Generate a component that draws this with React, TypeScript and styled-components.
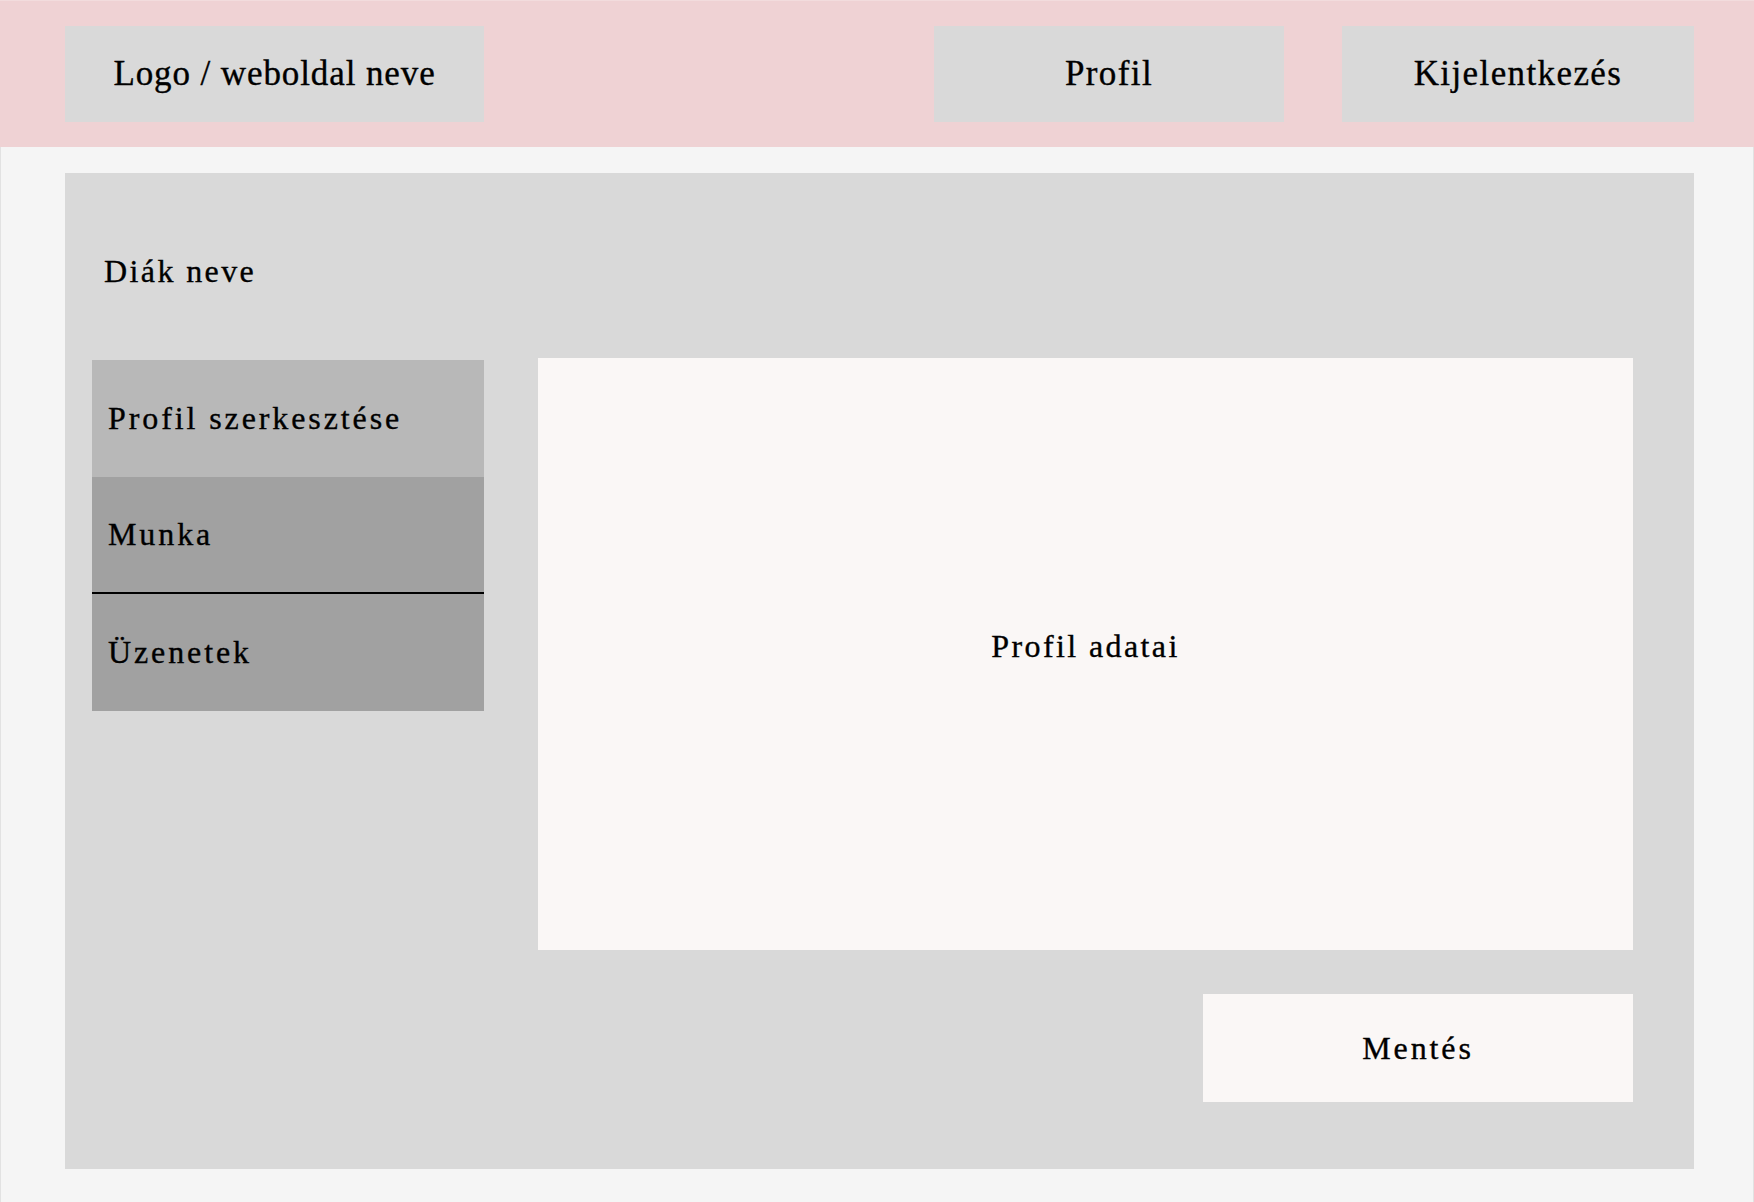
import styled, { createGlobalStyle } from 'styled-components'

const GlobalStyle = createGlobalStyle`
  html, body {
    margin: 0;
    padding: 0;
    background: #f5f5f5;
  }
  body {
    font-family: 'Liberation Serif', 'DejaVu Serif', serif;
    color: #000;
    -webkit-text-stroke: 0.35px #000;
  }
`

const Header = styled.header`
  height: 147px;
  box-sizing: border-box;
  background: #efd2d4;
  display: flex;
  align-items: center;
  padding: 0 60px 0 65px;
  border-top: 1px solid #f2dcdd;
`

const NavBox = styled.div<{ $width: number; $spacing?: number }>`
  width: ${(p) => p.$width}px;
  height: 96px;
  background: #d9d9d9;
  display: flex;
  align-items: center;
  justify-content: center;
  font-size: 35px;
  letter-spacing: ${(p) => p.$spacing ?? 1.4}px;
`

const NavRight = styled.nav`
  margin-left: auto;
  display: flex;
  gap: 58px;
`

const Main = styled.main`
  padding: 26px 59px 32px 64px;
  border-left: 1px solid #e2e2e2;
  border-right: 1px solid #e2e2e2;
  min-height: 1055px;
  box-sizing: border-box;
`

const Panel = styled.section`
  background: #d9d9d9;
  height: 996px;
  box-sizing: border-box;
  padding: 0 61px 0 27px;
  display: flex;
  flex-direction: column;
`

const StudentName = styled.h1`
  margin: 78px 0 67px 12px;
  font-size: 32px;
  font-weight: normal;
  line-height: 40px;
  letter-spacing: 2.4px;
`

const Body = styled.div`
  display: grid;
  grid-template-columns: 392px 1fr;
  gap: 54px;
`

const Sidebar = styled.ul`
  list-style: none;
  margin: 2px 0 0;
  padding: 0;
  display: flex;
  flex-direction: column;
  align-self: start;
`

const SideItem = styled.li<{ $active?: boolean; $divider?: boolean }>`
  height: ${(p) => (p.$divider ? 115 : 117)}px;
  background: ${(p) => (p.$active ? '#b8b8b8' : '#a1a1a1')};
  display: flex;
  align-items: center;
  padding-left: 16px;
  font-size: 32px;
  letter-spacing: 2.9px;
  border-bottom: ${(p) => (p.$divider ? '2px solid #000' : 'none')};
`

const Content = styled.div`
  height: 592px;
  background: #faf7f6;
  display: flex;
  align-items: center;
  justify-content: center;
  font-size: 32px;
  letter-spacing: 2.4px;
  padding-bottom: 16px;
  box-sizing: border-box;
`

const Actions = styled.div`
  display: flex;
  justify-content: flex-end;
  margin-top: 44px;
`

const SaveButton = styled.button`
  width: 430px;
  height: 108px;
  border: none;
  background: #faf7f6;
  font-family: inherit;
  font-size: 32px;
  letter-spacing: 2.9px;
  color: #000;
  -webkit-text-stroke: 0.35px #000;
  cursor: pointer;
`

export default function App() {
  return (
    <>
      <GlobalStyle />
      <Header>
        <NavBox $width={419} $spacing={0.9}>
          Logo / weboldal neve
        </NavBox>
        <NavRight>
          <NavBox $width={350}>Profil</NavBox>
          <NavBox $width={352}>Kijelentkezés</NavBox>
        </NavRight>
      </Header>
      <Main>
        <Panel>
          <StudentName>Diák neve</StudentName>
          <Body>
            <Sidebar>
              <SideItem $active>Profil szerkesztése</SideItem>
              <SideItem $divider>Munka</SideItem>
              <SideItem>Üzenetek</SideItem>
            </Sidebar>
            <Content>Profil adatai</Content>
          </Body>
          <Actions>
            <SaveButton>Mentés</SaveButton>
          </Actions>
        </Panel>
      </Main>
    </>
  )
}
